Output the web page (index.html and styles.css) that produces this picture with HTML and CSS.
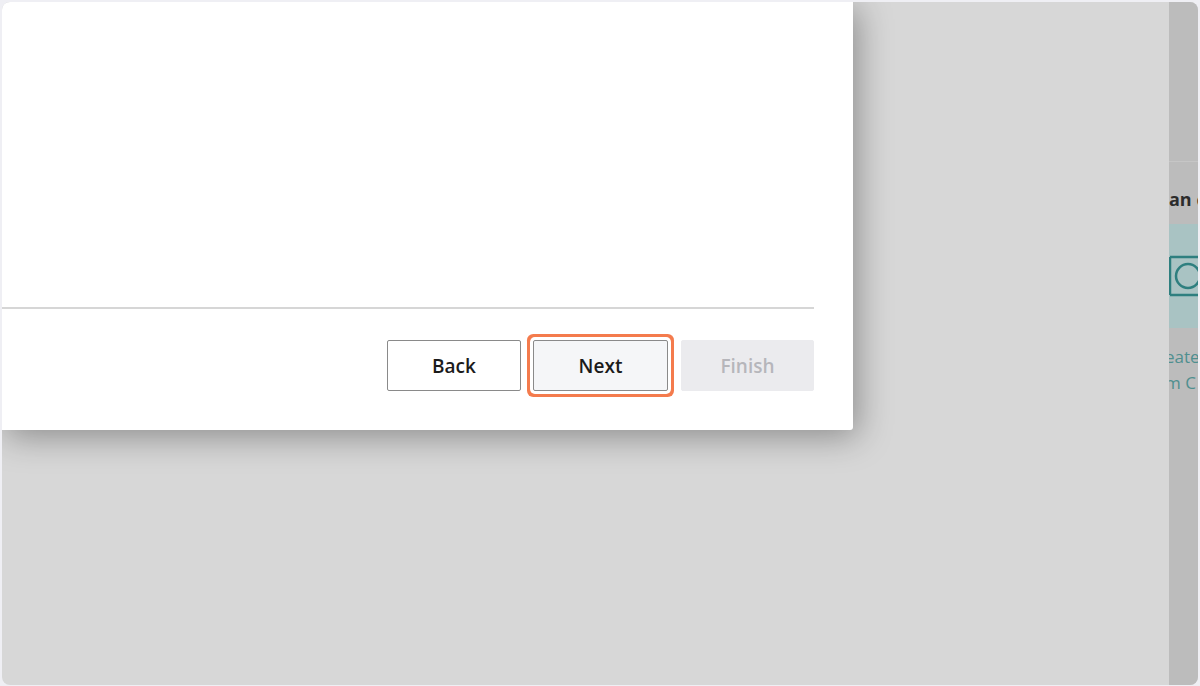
FILE: index.html
```html
<!DOCTYPE html>
<html>
<head>
  <title>Setup Wizard</title>
  <link rel="stylesheet" href="styles.css">
</head>
<body>
  <div class="screen">
    <div class="stage">
      <div class="dialog">
        <div class="dialog-body"></div>
        <div class="dialog-footer">
          <button class="btn">Back</button>
          <button class="btn btn-focus">Next</button>
          <button class="btn btn-disabled" disabled>Finish</button>
        </div>
      </div>
    </div>
    <aside class="side">
      <div class="side-top"></div>
      <div class="side-content">
        <h2 class="side-title">an c</h2>
        <div class="side-tile">
          <svg class="tile-icon" width="40" height="42" viewBox="0 0 40 42">
            <path d="M1 2 H40 M1 2 V40 M1 40 H40" fill="none" stroke="#2e7f7f" stroke-width="2.5"/>
            <circle cx="19" cy="21" r="12" fill="none" stroke="#2e7f7f" stroke-width="2.5"/>
          </svg>
        </div>
        <p class="side-link">eate</p>
        <p class="side-link">m C</p>
      </div>
    </aside>
  </div>
</body>
</html>
```

FILE: styles.css
```css
/* page frame */
html, body {
  margin: 0;
  height: 100%;
}

body {
  background-color: #efeff4;
  font-family: "Open Sans", "Noto Sans", Arial, sans-serif;
  padding: 2px;
  box-sizing: border-box;
}

.screen {
  display: flex;
  width: 1196px;
  height: 683px;
  border-radius: 8px;
  overflow: hidden;
  background-color: #d7d7d7;
}

.stage {
  flex: 1;
  position: relative;
}

/* wizard dialog */
.dialog {
  width: 851px;
  height: 428px;
  background-color: #fff;
  display: flex;
  flex-direction: column;
  box-shadow: 4px 6px 34px rgba(0, 0, 0, 0.36);
  border-radius: 0 0 3px 0;
}

.dialog-body {
  flex: 1;
}

.dialog-footer {
  display: flex;
  justify-content: flex-end;
  gap: 12px;
  margin-right: 39px;
  padding: 31px 0 39px;
  border-top: 2px solid #d6d6d6;
}

.btn {
  width: 134px;
  height: 51px;
  font-family: "Open Sans", "Noto Sans", Arial, sans-serif;
  font-size: 19px;
  font-weight: 600;
  color: #1b1b1b;
  background-color: #fff;
  border: 1px solid #8a8a8a;
  border-radius: 2px;
  padding: 0;
  cursor: pointer;
}

.btn-focus {
  width: 135px;
  background-color: #f5f6f8;
  box-shadow: 0 0 0 3px #fff, 0 0 0 6px #f47b4d;
}

.btn-disabled {
  width: 133px;
  margin-left: 1px;
  background-color: #ebebee;
  color: #b6b6bb;
  border-color: #ebebee;
  cursor: default;
}

/* dimmed side panel */
.side {
  width: 29px;
  background-color: #bcbcbc;
  overflow: hidden;
}

.side-top {
  height: 159px;
  border-bottom: 1px solid #c6c6c6;
}

.side-content {
  width: 300px;
}

.side-title {
  margin: 24px 0 0;
  font-size: 18px;
  font-weight: 700;
  color: #2c2c2c;
  line-height: 26px;
  height: 38px;
}

.side-tile {
  height: 104px;
  background-color: #a9c3c3;
  display: flex;
  align-items: center;
}

.tile-icon {
  display: block;
}

.side-link {
  margin: 0;
  font-size: 17px;
  line-height: 26px;
  color: #4f8f8f;
  text-indent: -4px;
}

.side-link:first-of-type {
  margin-top: 16px;
}
```
